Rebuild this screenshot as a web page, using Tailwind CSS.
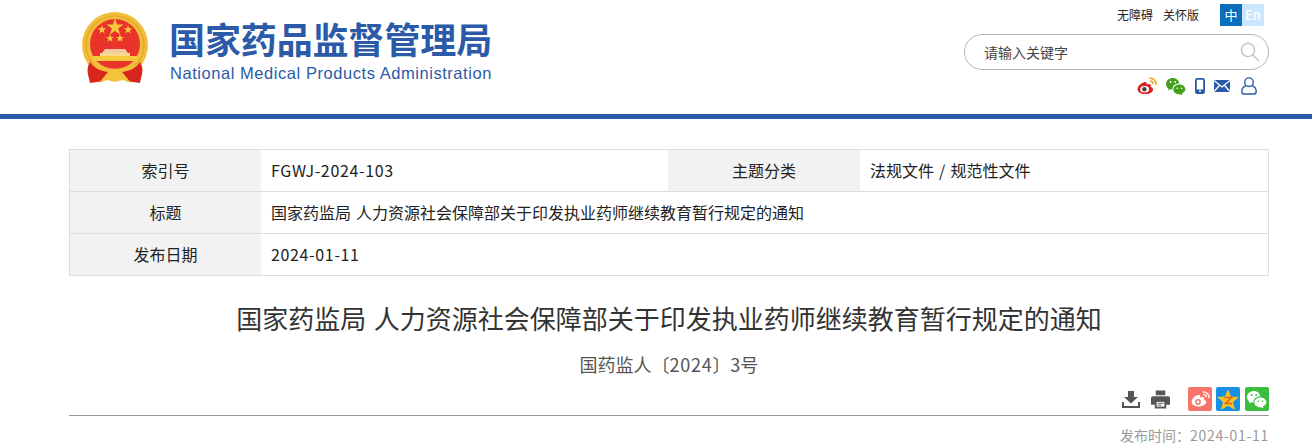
<!DOCTYPE html>
<html lang="zh-CN">
<head>
<meta charset="utf-8">
<title>国家药品监督管理局</title>
<script src="https://cdn.jsdelivr.net/npm/@tailwindcss/browser@4"></script>
</head>
<body class="bg-white overflow-hidden font-['Noto_Sans_CJK_SC','Liberation_Sans',sans-serif] text-[#333]">
<div class="h-[447px] overflow-hidden">
<header class="h-[119px] border-b-[5px] border-[#2b5ba8]">
  <div class="w-[1200px] ml-[69px] flex justify-between h-[114px]">
    <div class="flex pl-[13px] pt-[12px] gap-[22px]">
      <svg width="66" height="71" viewBox="0 0 66 71" class="shrink-0">
        <circle cx="33" cy="33" r="33" fill="#f2bd3a"/>
        <circle cx="33" cy="33" r="29" fill="none" stroke="#e3a42a" stroke-width="1.2"/>
        <circle cx="33" cy="32" r="25" fill="#e8342a"/>
        <polygon points="33,6 35,12.5 41.5,12.5 36.2,16.4 38.2,22.8 33,18.8 27.8,22.8 29.8,16.4 24.5,12.5 31,12.5" fill="#f9c93d"/>
        <polygon points="20,13 21,16.2 24.4,16.2 21.7,18.2 22.7,21.4 20,19.4 17.3,21.4 18.3,18.2 15.6,16.2 19,16.2" fill="#f9c93d"/>
        <polygon points="46,13 47,16.2 50.4,16.2 47.7,18.2 48.7,21.4 46,19.4 43.3,21.4 44.3,18.2 41.6,16.2 45,16.2" fill="#f9c93d"/>
        <polygon points="28,22 29,25 32,25 29.6,26.8 30.5,29.8 28,28 25.5,29.8 26.4,26.8 24,25 27,25" fill="#f9c93d"/>
        <polygon points="38,22 39,25 42,25 39.6,26.8 40.5,29.8 38,28 35.5,29.8 36.4,26.8 34,25 37,25" fill="#f9c93d"/>
        <path d="M23 37 L43 37 L46 41 L20 41Z" fill="#f6c8a0"/>
        <rect x="18" y="41" width="30" height="3" fill="#f9d98a"/>
        <rect x="11" y="44" width="44" height="5" fill="#f9c93d"/>
        <path d="M8 50 C18 59 48 59 58 50 L59 53 C48 64 18 64 7 53Z" fill="#f2bd3a"/>
        <path d="M8 50 C3 58 7 64 8 71 L22 69 L26 60 C18 59 12 56 8 50Z" fill="#d8261c"/>
        <path d="M58 50 C63 58 59 64 58 71 L44 69 L40 60 C48 59 54 56 58 50Z" fill="#d8261c"/>
        <path d="M17 71 L25 61 L33 57 L41 61 L49 71 L41 68 L33 70 L25 68Z" fill="#f4c23c"/>
      </svg>
      <div class="pt-[3px]">
        <div class="text-[36px] leading-[46px] font-bold text-[#2b5ba8] tracking-[-0.1px] -ml-[1px] whitespace-nowrap">国家药品监督管理局</div>
        <div class="font-['Liberation_Sans',sans-serif] text-[16.5px] leading-[20px] mt-[2px] text-[#2b5ba8] tracking-[0.55px] whitespace-nowrap">National Medical Products Administration</div>
      </div>
    </div>
    <div class="w-[305px] pt-[4px] flex flex-col items-end">
      <div class="flex items-center h-[22px] pr-[5px] text-[12px] text-[#222]">
        <span>无障碍</span><span class="ml-[10px]">关怀版</span>
        <span class="ml-[21px] w-[22px] h-[22px] bg-[#0a6ebd] text-white text-[13px] text-center leading-[22px]">中</span>
        <span class="w-[22px] h-[22px] bg-[#cce6ff] text-white text-[13px] font-medium text-center leading-[22px]">En</span>
      </div>
      <div class="mt-[8px] w-[305px] h-[36px] border border-[#b5b5b5] rounded-[18px] flex items-center justify-between pl-[19px] pr-[8px] text-[14px] text-[#444]">
        <span>请输入关键字</span>
        <svg width="20" height="20" viewBox="0 0 20 20" fill="none" stroke="#c4c4c4" stroke-width="1.4"><circle cx="8" cy="8" r="6.6"/><path d="M12.8 13 L19 19"/></svg>
      </div>
      <div class="mt-[7px] flex items-center pr-[12px] h-[18px]">
        <svg width="20" height="18" viewBox="0 0 20 18"><path d="M8 5 C3.5 6 .5 9.6.5 12.2 C.5 15 4 17 8.4 17 C13 17 16 14.8 16 12.4 C16 10.7 14.3 10.3 13.6 10 C14.3 8.2 13.6 7 12 7 L9.6 7.6 C10 5.6 9.5 4.7 8 5Z" fill="#dc1e20"/><ellipse cx="7.6" cy="12.3" rx="4.4" ry="3.2" fill="#fff"/><circle cx="7.4" cy="12.3" r="2.2" fill="#444"/><path d="M12.5 1.2 A6 6 0 0 1 19 8 M13 4 A3 3 0 0 1 16 7" fill="none" stroke="#efa625" stroke-width="1.6"/></svg>
        <svg width="20" height="17" viewBox="0 0 20 17" class="ml-[9px]"><path d="M7 0 C3 0 0 2.7 0 6 C0 7.9 1 9.4 2.5 10.6 L2 12.5 L4.3 11.3 C5 11.5 5.8 11.6 6.6 11.6 C6.2 8 9 5.5 13.3 5.5 C12.8 2.3 10.2 0 7 0Z" fill="#45a11d"/><path d="M13.4 6.6 C10 6.6 7.4 8.8 7.4 11.5 C7.4 14.2 10 16.3 13.4 16.3 L16.4 17 L16 15.2 C18 14.2 19.4 13 19.4 11.5 C19.4 8.8 16.8 6.6 13.4 6.6Z" fill="#45a11d"/><circle cx="4.6" cy="4" r=".9" fill="#fff"/><circle cx="9.2" cy="4" r=".9" fill="#fff"/><circle cx="11.2" cy="10.2" r=".8" fill="#fff"/><circle cx="15.6" cy="10.2" r=".8" fill="#fff"/></svg>
        <svg width="10" height="16" viewBox="0 0 10 16" class="ml-[9px]"><rect x=".9" y=".9" width="8.2" height="14.2" rx="1.4" fill="#fff" stroke="#2b5ba8" stroke-width="1.8"/><rect x="1" y="11.5" width="8" height="3.5" fill="#2b5ba8"/><circle cx="5" cy="13.2" r=".9" fill="#fff"/></svg>
        <svg width="16" height="12" viewBox="0 0 16 12" class="ml-[9px]"><rect width="16" height="12" fill="#2b5ba8"/><path d="M0 .5 L8 7 L16 .5 M0 11.5 L5.6 5.2 M16 11.5 L10.4 5.2" fill="none" stroke="#fff" stroke-width="1.3"/></svg>
        <svg width="16" height="18" viewBox="0 0 16 18" class="ml-[11px]" fill="none" stroke="#2b5ba8" stroke-width="1.4"><circle cx="8" cy="5.2" r="4.3"/><path d="M5 8.6 C2.5 9.6.8 11.5.8 14.2 C.8 16 1.6 17 3 17 L13 17 C14.4 17 15.2 16 15.2 14.2 C15.2 11.5 13.5 9.6 11 8.6"/></svg>
      </div>
    </div>
  </div>
</header>
<main class="w-[1200px] ml-[69px]">
  <div class="mt-[30px] border border-[#ddd] grid grid-cols-[191px_407px_192px_1fr] text-[16px] leading-[41px] text-[#222]">
    <div class="bg-[#f2f2f2] text-center h-[42px] border-b border-[#ddd]">索引号</div>
    <div class="pl-[10px] h-[42px] border-b border-[#ddd] tracking-[0.65px]">FGWJ-2024-103</div>
    <div class="bg-[#f2f2f2] text-center h-[42px] border-b border-[#ddd]">主题分类</div>
    <div class="pl-[10px] h-[42px] border-b border-[#ddd] [word-spacing:1.5px]">法规文件 / 规范性文件</div>
    <div class="bg-[#f2f2f2] text-center h-[42px] border-b border-[#ddd]">标题</div>
    <div class="col-span-3 pl-[10px] h-[42px] border-b border-[#ddd] [word-spacing:1.5px]">国家药监局 人力资源社会保障部关于印发执业药师继续教育暂行规定的通知</div>
    <div class="bg-[#f2f2f2] text-center h-[41px]">发布日期</div>
    <div class="col-span-3 pl-[10px] h-[41px] tracking-[0.65px]">2024-01-11</div>
  </div>
  <h1 class="mt-[23px] text-[26px] leading-[38px] font-normal text-center text-[#333] [word-spacing:1.5px]">国家药监局 人力资源社会保障部关于印发执业药师继续教育暂行规定的通知</h1>
  <p class="mt-[13px] text-[18px] leading-[28px] text-center text-[#555]">国药监人〔<span class="tracking-[0.7px]">2024</span>〕3号</p>
  <div class="mt-[9px] h-[29px] flex items-start justify-end border-b border-[#999]">
    <svg width="18" height="18" viewBox="0 0 18 18" class="mt-[3px]"><path d="M6 1 H12 V7 H16 L9 13.5 L2 7 H6Z M0 12 H2 V16 H16 V12 H18 V18 H0Z" fill="#555"/></svg>
    <svg width="19" height="19" viewBox="0 0 20 19" class="ml-[11px] mt-[3px]"><path d="M5 0 H15 V5 H5Z M2 6 H18 C19 6 20 7 20 8 V15 H16 V19 H4 V15 H0 V8 C0 7 1 6 2 6Z" fill="#555"/><path d="M6 12 H14 V17 H6Z" fill="#fff"/><path d="M7 13.5 H13 M7 15.5 H11" stroke="#555"/></svg>
    <div class="ml-[18px] w-[24px] h-[24px] bg-[#f77668] rounded-[2px] flex items-center justify-center">
      <svg width="19" height="16" viewBox="0 0 20 17"><path d="M8 4 C3.5 5 .5 9 .5 11.6 C.5 14.5 4 16.4 8.4 16.4 C13 16.4 16 14.2 16 11.8 C16 10.1 14.3 9.7 13.6 9.4 C14.3 7.6 13.6 6.4 12 6.4 L9.6 7 C10 5 9.5 3.7 8 4Z" fill="#fff"/><circle cx="7.4" cy="11.6" r="3" fill="#f77668"/><circle cx="7.4" cy="11.6" r="1.5" fill="#fff"/><path d="M12.5 1 A6 6 0 0 1 19 7.6 M13 3.6 A3 3 0 0 1 16 6.6" fill="none" stroke="#fff" stroke-width="1.5"/></svg>
    </div>
    <div class="ml-[4px] w-[24px] h-[24px] bg-[#1590e6] rounded-[2px] flex items-center justify-center">
      <svg width="22" height="21" viewBox="0 0 22 21"><polygon points="11,0 14,7.4 22,8 16,13 18,21 11,16.8 4,21 6,13 0,8 8,7.4" fill="#fbbe21"/><path d="M7.5 8.5 H14.5 L8.5 14.5 H15" fill="none" stroke="#d9641e" stroke-width="1.6"/></svg>
    </div>
    <div class="ml-[5px] w-[24px] h-[24px] bg-[#3bbd3e] rounded-[2px] flex items-center justify-center">
      <svg width="20" height="17" viewBox="0 0 20 17"><path d="M7 0 C3 0 0 2.7 0 6 C0 7.9 1 9.4 2.5 10.6 L2 12.5 L4.3 11.3 C5 11.5 5.8 11.6 6.6 11.6 C6.2 8 9 5.5 13.3 5.5 C12.8 2.3 10.2 0 7 0Z" fill="#fff"/><path d="M13.4 6.6 C10 6.6 7.4 8.8 7.4 11.5 C7.4 14.2 10 16.3 13.4 16.3 L16.4 17 L16 15.2 C18 14.2 19.4 13 19.4 11.5 C19.4 8.8 16.8 6.6 13.4 6.6Z" fill="#fff"/><circle cx="4.6" cy="4" r=".9" fill="#3bbd3e"/><circle cx="9.2" cy="4" r=".9" fill="#3bbd3e"/><circle cx="11.2" cy="10.2" r=".8" fill="#3bbd3e"/><circle cx="15.6" cy="10.2" r=".8" fill="#3bbd3e"/></svg>
    </div>
  </div>
  <p class="mt-[8px] text-right text-[14px] leading-[22px] text-[#999]">发布时间：<span class="tracking-[0.7px]">2024-01-11</span></p>
</main>
</div>
</body>
</html>
